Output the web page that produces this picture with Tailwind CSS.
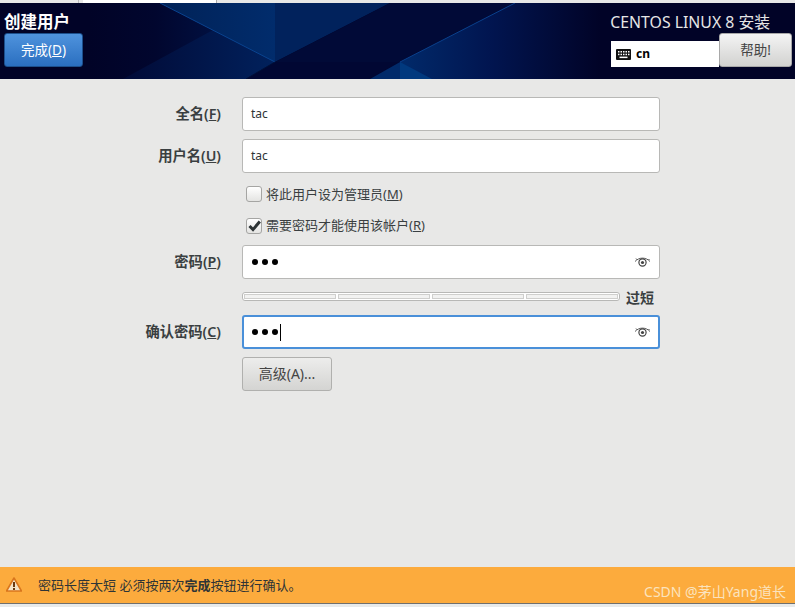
<!DOCTYPE html>
<html lang="zh">
<head>
<meta charset="utf-8">
<script src="https://cdn.jsdelivr.net/npm/@tailwindcss/browser@4"></script>
</head>
<body class="m-0 w-[795px] h-[607px] overflow-hidden bg-[#e8e8e7] text-[#2e3436] text-[13px] font-['Noto_Sans','Noto_Sans_CJK_SC',sans-serif]">
<div class="flex h-[3px] bg-[#e8e8e7]">
  <div class="w-[79px] border-r border-[#bbb]"></div>
  <div class="w-[4px]"></div>
  <div class="w-[134px] bg-white border-r border-[#aaa]"></div>
</div>
<header class="relative h-[76px] bg-[#010327] overflow-hidden">
  <svg class="absolute inset-0" width="795" height="76" viewBox="0 3 795 76">
    <defs>
      <linearGradient id="a" gradientUnits="userSpaceOnUse" x1="90" x2="275" y1="0" y2="0"><stop offset="0" stop-color="#010327"/><stop offset="0.35" stop-color="#01062e"/><stop offset="1" stop-color="#011a52"/></linearGradient>
      <linearGradient id="f" gradientUnits="userSpaceOnUse" x1="120" x2="275" y1="0" y2="0"><stop offset="0" stop-color="#010a36"/><stop offset="1" stop-color="#01215c"/></linearGradient>
      <linearGradient id="b" gradientUnits="userSpaceOnUse" x1="160" x2="275" y1="0" y2="0"><stop offset="0" stop-color="#012257"/><stop offset="1" stop-color="#012c6c"/></linearGradient>
      <linearGradient id="c" gradientUnits="userSpaceOnUse" x1="400" x2="600" y1="0" y2="0"><stop offset="0" stop-color="#012a6a"/><stop offset="0.45" stop-color="#011550"/><stop offset="1" stop-color="#010327"/></linearGradient>
      <linearGradient id="g" gradientUnits="userSpaceOnUse" x1="500" x2="610" y1="0" y2="0"><stop offset="0" stop-color="#010a36"/><stop offset="1" stop-color="#010327"/></linearGradient>
    </defs>
    <rect y="3" width="795" height="76" fill="#010327"/>
    <rect x="90" y="3" width="185" height="76" fill="url(#a)"/>
    <polygon points="123,79 213,30 275,62 246,79" fill="url(#f)"/>
    <polygon points="160,3 275,3 275,62" fill="url(#b)"/>
    <polygon points="275,3 390,3 275,62" fill="#01225c"/>
    <polygon points="275,62 390,3 515,3 400,62" fill="#010a37"/>
    <polygon points="246,79 275,62 400,62 370,79" fill="#010733"/>
    <polygon points="515,3 610,3 610,40 500,40" fill="url(#g)"/>
    <polygon points="400,62 515,3 610,3 610,79 400,79" fill="url(#c)"/>
    <polygon points="400,62 400,79 370,79" fill="#012a6a"/>
    <polygon points="400,62 432,79 400,79" fill="#01397e"/>
    <line x1="160" y1="3" x2="275" y2="62" stroke="#0a438f" stroke-width="1"/>
    <line x1="275" y1="62" x2="246" y2="79" stroke="#011038" stroke-width="1"/>
    <line x1="400" y1="62" x2="515" y2="3" stroke="#0a408c" stroke-width="1"/>
    <rect x="0" y="3" width="90" height="76" fill="#010327"/>
  </svg>
  <div class="relative flex justify-between h-full">
    <div class="pl-1 pt-[9px] flex flex-col items-start">
      <h1 class="text-[16.5px] leading-[20px] font-bold text-white">创建用户</h1>
      <button class="mt-[1px] w-[79px] h-[34px] rounded-[3px] border border-[#1c4f8c] bg-gradient-to-b from-[#4f93dd] to-[#2a6fc0] text-white text-[13.5px] pt-[1px]">完成(<span class="underline">D</span>)</button>
    </div>
    <div class="flex flex-col items-end pr-[25px] pt-[9px] relative">
      <div class="text-[#e6e6e6] text-[15.8px] leading-[20px] font-['Noto_Sans','Noto_Sans_CJK_SC',sans-serif]">CENTOS LINUX 8 安装</div>
      <div class="flex items-start mr-[-22px] mt-[1px]">
        <div class="flex items-center gap-[5px] w-[108px] h-[26px] mt-[8px] bg-white pl-[5px] text-black text-[12px] font-bold">
          <svg width="15" height="11" viewBox="0 0 15 11"><rect width="15" height="11" rx="1" fill="#111"/><g fill="#fff"><rect x="2" y="2" width="1.5" height="1.5"/><rect x="4.5" y="2" width="1.5" height="1.5"/><rect x="7" y="2" width="1.5" height="1.5"/><rect x="9.5" y="2" width="1.5" height="1.5"/><rect x="12" y="2" width="1.5" height="1.5"/><rect x="2" y="4.7" width="1.5" height="1.5"/><rect x="4.5" y="4.7" width="1.5" height="1.5"/><rect x="7" y="4.7" width="1.5" height="1.5"/><rect x="9.5" y="4.7" width="1.5" height="1.5"/><rect x="12" y="4.7" width="1.5" height="1.5"/><rect x="3.5" y="7.6" width="8" height="1.5"/></g></svg>
          <span>cn</span>
        </div>
        <button class="w-[73px] h-[34px] rounded-[3px] border border-[#a8a8a8] bg-gradient-to-b from-[#f4f4f4] to-[#d2d2d0] text-[13.5px] text-[#444]">帮助!</button>
      </div>
    </div>
  </div>
</header>
<main class="h-[488px] pt-[18px] pl-[105px]">
  <div class="grid grid-cols-[116px_418px] gap-x-[21px] items-center">
    <label class="text-right font-semibold text-[14.3px] h-[34px] leading-[34px] text-[#3a3f41]">全名(<span class="underline">F</span>)</label>
    <div class="h-[34px] rounded-[3px] border border-[#b8b8b6] bg-white px-2 leading-[32px] text-[12px]">tac</div>

    <label class="mt-2 text-right font-semibold text-[14.3px] h-[34px] leading-[34px] text-[#3a3f41]">用户名(<span class="underline">U</span>)</label>
    <div class="mt-2 h-[34px] rounded-[3px] border border-[#b8b8b6] bg-white px-2 leading-[32px] text-[12px]">tac</div>

    <div></div>
    <div class="mt-[11px] h-[20px] flex items-center gap-[4px] pl-[4px]">
      <span class="w-[16px] h-[16px] rounded-[3px] border border-[#a5a5a3] bg-gradient-to-b from-white to-[#e4e4e2]"></span>
      <span class="pt-[1px] text-[#3a3f41]">将此用户设为管理员(<span class="underline">M</span>)</span>
    </div>

    <div></div>
    <div class="mt-[12px] h-[20px] flex items-center gap-[4px] pl-[4px]">
      <span class="w-[16px] h-[16px] rounded-[3px] border border-[#a5a5a3] bg-gradient-to-b from-white to-[#e4e4e2] flex items-center justify-center">
        <svg width="13" height="12" viewBox="0 0 13 12"><path d="M1.5 6 L5 9.6 L11.8 1.5" fill="none" stroke="#2e3436" stroke-width="3"/></svg>
      </span>
      <span class="text-[#3a3f41]">需要密码才能使用该帐户(<span class="underline">R</span>)</span>
    </div>

    <label class="mt-[9px] text-right font-semibold text-[14.3px] h-[34px] leading-[34px] text-[#3a3f41]">密码(<span class="underline">P</span>)</label>
    <div class="mt-[9px] h-[34px] rounded-[3px] border border-[#b8b8b6] bg-white pl-[9px] pr-[8px] flex items-center justify-between">
      <span class="flex gap-[4px]"><i class="block w-[6px] h-[6px] rounded-full bg-black"></i><i class="block w-[6px] h-[6px] rounded-full bg-black"></i><i class="block w-[6px] h-[6px] rounded-full bg-black"></i></span>
      <svg width="17" height="12" viewBox="0 0 17 12"><path d="M1 5.5 C5 1 12 1 16 5.5" fill="none" stroke="#555" stroke-width="1"/><path d="M2 2.5 L3.5 4 M14.5 4 L15.5 3" stroke="#555"/><circle cx="8.5" cy="6.5" r="3.6" fill="none" stroke="#444" stroke-width="1.2"/><circle cx="8.5" cy="6.5" r="1.6" fill="#444"/></svg>
    </div>

    <div></div>
    <div class="mt-[13px] h-[9px] relative">
      <div class="h-full w-[378px] rounded-[3px] border border-[#b8b8b6] bg-white p-[1px] flex gap-[2px]">
        <i class="block flex-1 border border-[#cfcfcd] bg-[#f2f2f1]"></i><i class="block flex-1 border border-[#cfcfcd] bg-[#f2f2f1]"></i><i class="block flex-1 border border-[#cfcfcd] bg-[#f2f2f1]"></i><i class="block flex-1 border border-[#cfcfcd] bg-[#f2f2f1]"></i>
      </div>
      <span class="absolute left-[384px] top-[-4px] leading-[20px] font-semibold text-[14px] text-[#3a3f41]">过短</span>
    </div>

    <label class="mt-[14px] text-right font-semibold text-[14.3px] h-[34px] leading-[34px] text-[#3a3f41]">确认密码(<span class="underline">C</span>)</label>
    <div class="mt-[14px] h-[34px] rounded-[3px] border-2 border-[#4a90d9] bg-white pl-[8px] pr-[7px] flex items-center justify-between">
      <span class="flex items-center gap-[4px]"><i class="block w-[6px] h-[6px] rounded-full bg-black"></i><i class="block w-[6px] h-[6px] rounded-full bg-black"></i><i class="block w-[6px] h-[6px] rounded-full bg-black"></i><i class="block w-px h-[17px] bg-black ml-[-2px]"></i></span>
      <svg width="17" height="12" viewBox="0 0 17 12"><path d="M1 5.5 C5 1 12 1 16 5.5" fill="none" stroke="#555" stroke-width="1"/><path d="M2 2.5 L3.5 4 M14.5 4 L15.5 3" stroke="#555"/><circle cx="8.5" cy="6.5" r="3.6" fill="none" stroke="#444" stroke-width="1.2"/><circle cx="8.5" cy="6.5" r="1.6" fill="#444"/></svg>
    </div>

    <div></div>
    <div class="mt-2 h-[34px]">
      <button class="w-[90px] h-[34px] rounded-[3px] border border-[#b0b0ae] bg-gradient-to-b from-[#ededec] to-[#d4d4d2] text-[14px] text-[#444] pb-[2px]">高级(A)...</button>
    </div>
  </div>
</main>
<footer class="relative h-[36px] bg-[#fcab3d] flex items-center pl-[38px] text-[13px] text-[#2e3436]">
  <svg class="absolute left-[6px] top-[10px]" width="16" height="15" viewBox="0 0 16 15"><path d="M8 1 L15.5 14 L0.5 14 Z" fill="#f3e4c8" stroke="#d9761c" stroke-width="1.6" stroke-linejoin="round"/><rect x="7" y="5" width="2" height="5" fill="#6b3a10"/><rect x="7" y="11" width="2" height="2" fill="#6b3a10"/></svg>
  <span class="pt-[2px]">密码长度太短 必须按两次<b>完成</b>按钮进行确认。</span>
  <span class="absolute right-[9px] top-[15px] leading-[20px] text-[14px] text-[#fbe3bd] font-['Noto_Sans','Noto_Sans_CJK_SC',sans-serif]">CSDN @茅山Yang道长</span>
</footer>
<div class="h-px bg-[#6f6f6e]"></div>
<div class="h-[3px] bg-[#e8eaea]"></div>
</body>
</html>
